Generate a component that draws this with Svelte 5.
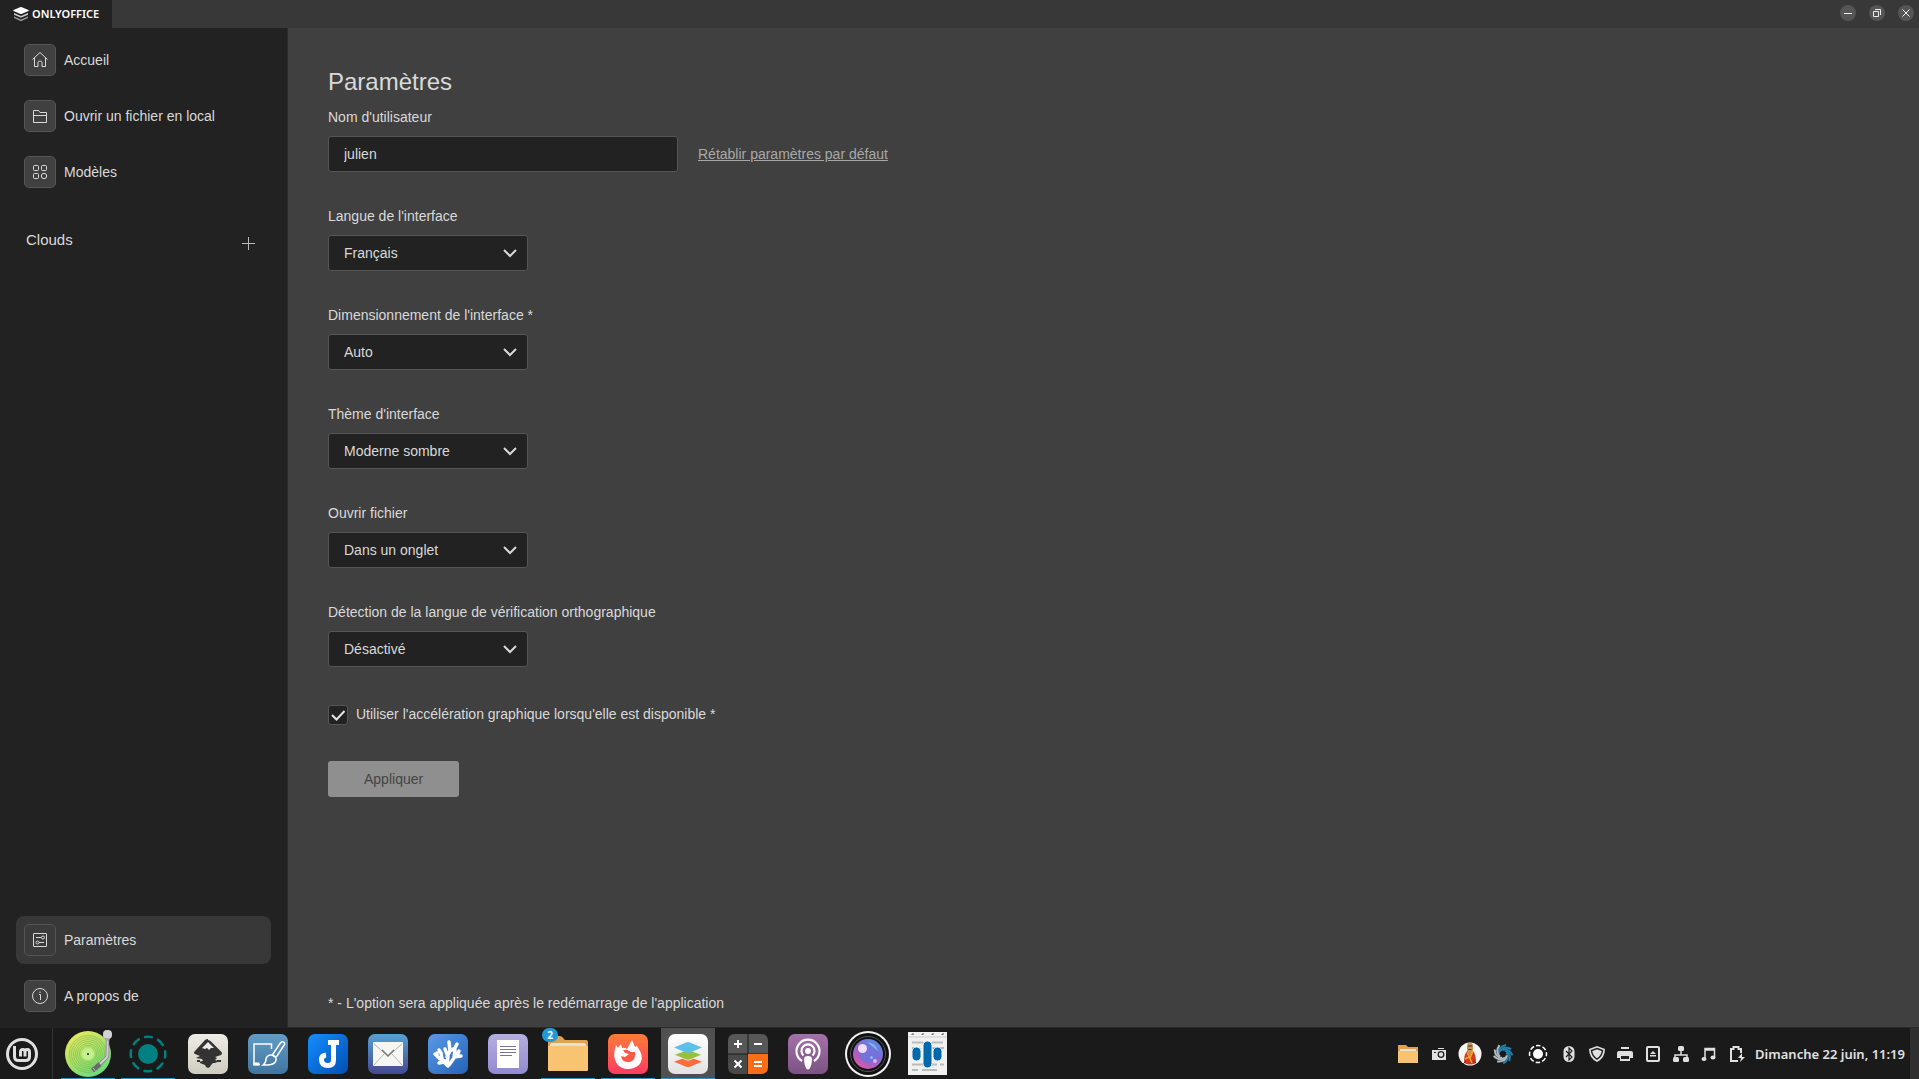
<script>
    const navItems = [
        {
            label: "Accueil",
            icon: '<path d="M1.5 8.5 9 1.5l7.500 7M3.500 7v8.500h3.500v-4q0-1.500 2-1.500t2 1.500v4h3.500V7"/>',
        },
        {
            label: "Ouvrir un fichier en local",
            icon: '<path d="M2.500 15.500h13v-10H9L7.500 3.500h-5zM2.500 8.500h13"/>',
        },
        {
            label: "Modèles",
            icon: '<rect x="2.500" y="2.500" width="5" height="5" rx="1"/><rect x="10.500" y="2.500" width="5" height="5" rx="1"/><rect x="2.500" y="10.500" width="5" height="5" rx="1"/><circle cx="13" cy="13" r="2.700"/>',
        },
    ];

    const bottomItems = [
        {
            label: "Paramètres",
            active: true,
            icon: '<rect x="2.500" y="2.500" width="13" height="13" rx="0.500"/><path d="M5 6.500h5.500M8 11.500h5"/><circle cx="12" cy="6.500" r="1.500"/><circle cx="6.500" cy="11.500" r="1.500"/>',
        },
        {
            label: "A propos de",
            icon: '<circle cx="9" cy="9" r="7.500"/><path d="M8 7.500h1.500V13M9 4.500v1.500"/>',
        },
    ];

    let username = "julien";
    let useGpu = true;

    const settings = [
        {
            id: "lang",
            label: "Langue de l'interface",
            options: ["Français", "English"],
        },
        {
            id: "scaling",
            label: "Dimensionnement de l'interface *",
            options: ["Auto", "100%", "125%", "150%"],
        },
        {
            id: "theme",
            label: "Thème d'interface",
            options: ["Moderne sombre", "Moderne clair"],
        },
        {
            id: "open",
            label: "Ouvrir fichier",
            options: ["Dans un onglet", "Dans une fenêtre"],
        },
        {
            id: "spell",
            label: "Détection de la langue de vérification orthographique",
            options: ["Désactivé", "Activé"],
        },
    ];

    const tile = (fill) =>
        `<rect x="4" y="4" width="40" height="40" rx="7" fill="${fill}"/>`;

    const apps = [
        {
            label: "Musique",
            running: true,
            icon: `<circle cx="24" cy="24" r="23" fill="url(#g-vinyl)"/>
                <g fill="none" stroke="#6fae45" stroke-width="0.600" opacity="0.8"><circle cx="24" cy="24" r="8.500"/><circle cx="24" cy="24" r="10.500"/><circle cx="24" cy="24" r="12.500"/><circle cx="24" cy="24" r="14.500"/><circle cx="24" cy="24" r="16.500"/><circle cx="24" cy="24" r="18.500"/></g>
                <circle cx="24" cy="24" r="6" fill="#c5f08e"/><circle cx="24" cy="24" r="1" fill="#222"/>
                <path d="M43.500 8v17.500q0 1-1 2L33 37" fill="none" stroke="#85858a" stroke-width="3.500"/><path d="M43.500 8v17.500q0 1-1 2L33 37" fill="none" stroke="#d0d0d4" stroke-width="2"/>
                <path d="M36 34l-7.500 6.500" stroke="#68686e" stroke-width="4.500"/><path d="M29 38l2.500 3" stroke="#bbb"/>
                <rect x="39" y="0" width="9" height="9" rx="4" fill="#d2d2d4"/><path d="M41 8h5l-1 3h-3z" fill="#aaa"/>`,
        },
        {
            label: "Moniteur",
            running: true,
            icon: `<circle cx="24" cy="24" r="10" fill="#008080"/>
                <circle cx="24" cy="24" r="17.300" fill="none" stroke="#008080" stroke-width="2.500" stroke-linecap="round" stroke-dasharray="7 6.587" stroke-dashoffset="3.500"/>`,
        },
        {
            label: "Inkscape",
            icon: `${tile("url(#g-cream)")}<path d="M24 10q1.500 0 3 1.500l10 10q2 2 0 3.500l-6 2 2 1-2 2 3 1q-1 2-5 2l-2 2q-1 3-3 3t-3-3l-5-2q-1-2 3-2l-1-2-6-1 4-2-5-2q-2-1 0-3l10-11q1.500-1 3-1z" fill="#333"/>
                <path d="M24 12l-6 6 3 1 2-1 2 2 2-2 3 0z" fill="#eceae3"/><path d="M13 31h3M33 31h4" stroke="#333" stroke-width="2"/>`,
        },
        {
            label: "Dessin",
            icon: `${tile("url(#g-paint)")}<g fill="none" stroke="#fff" stroke-width="1.500"><path d="M16 34.500h-6V14h17.500v5"/><path d="M9.500 34h6" stroke-width="3"/>
                <path d="M29 24 36 13.500q2-2.500 3.800-1.300t0 3.300L33 26q-1.500 1.300-3 .500T29 24zM19 35q3-2 3-6 1-4 5-4t5 3q1 8-13 7z"/></g>`,
        },
        {
            label: "Joplin",
            icon: `${tile("url(#g-joplin)")}<path d="M24 12.500h11M29.500 13v17q0 5.500-5.500 5.500-6.500 0-6.500-6 0-4 4.500-4.500" fill="none" stroke="#fff" stroke-width="5"/>`,
        },
        {
            label: "Courrier",
            icon: `${tile("url(#g-mail)")}<rect x="9" y="12" width="30" height="24" rx="1" fill="#f6f6f3"/>
                <path d="M10 14l14 12 14-12M10 35l10-11M38 35 28 24" fill="none" stroke="#b5b5b0" stroke-width="1"/><path d="M18 20l6 6 6-6" fill="none" stroke="#777" stroke-width="1.500"/>`,
        },
        {
            label: "Corail",
            icon: `${tile("url(#g-coral)")}<path d="M24 36l-3-5-5-2-5-5M15 33l5-1 4 4M18 29l-1-6-2-3M23 34l1-7-3-8M23 27l3-6-1-9M26 21l5-3 2-4M25 35l5-7 1-8M30 27l7-1M33 26l2-5M13 26v-3" fill="none" stroke="#fff" stroke-width="3.500" stroke-linecap="round" stroke-linejoin="round"/>`,
        },
        {
            label: "Texte",
            icon: `${tile("url(#g-text)")}<path d="M13 10h22v28H13z" fill="#fff"/><path d="M16 16.500h16M16 19.500h16M16 22.500h16M16 25.500h12" stroke="#777399"/>`,
        },
        {
            label: "Fichiers",
            running: true,
            badge: 2,
            icon: `<path d="M4 6h12q2 0 4 3l1 1h21q2 0 2 2v9H4z" fill="#dfa24e"/><path d="M6 15q0-2 2-2h32q2 0 2 2v6H6z" fill="#e3e1dd"/><path d="M4 16h40v24q0 1-1 1H5q-1 0-1-1z" fill="#f8c471"/>`,
        },
        {
            label: "Firefox",
            running: true,
            icon: `${tile("url(#g-fox)")}<path d="M12 15l2 3 3-4 1 4q3-1 5 1l5-9 3 7 2-1 3 5q4 8-1 14-5 4-11 4-7 0-11-5-5-7-1-19z" fill="#fff"/>
                <path d="M19 20q4-1 6 1l4-1q3 2 2 6-1 6-7 6-6 0-7-6l4 1 4-3-4-1z" fill="#ff5945"/><path d="M28 15l3 7-5 0z" fill="#fff"/>`,
        },
        {
            label: "ONLYOFFICE",
            running: true,
            active: true,
            icon: `${tile("url(#g-white)")}<path d="M24 26.500l14 5.300-12 5q-2 .800-4 0l-12-5z" fill="#fb6d3f"/><path d="M24 19.500l14 5.300-12 5q-2 .800-4 0l-12-5z" fill="#95c13d" stroke="#efefef" stroke-width="0.800"/><path d="M22 12.500q2-.800 4 0l12 5-12 5q-2 .800-4 0l-12-5z" fill="#5dc0e8"/>`,
        },
        {
            label: "Calculatrice",
            icon: `<path d="M11 4h12.500v19.500H4V11q0-7 7-7z" fill="#575757"/><path d="M24.500 4H37q7 0 7 7v12.500H24.500z" fill="#575757"/><path d="M4 24.500h19.500V44H11q-7 0-7-7z" fill="#494949"/><path d="M24 24h20v13q0 7-7 7H24z" fill="#fb6d17"/>
                <path d="M10 14h8M14 10v8M30 14h8M10.500 30.500l7 7M17.500 30.500l-7 7M30 32h8M30 36h8" stroke="#fff" stroke-width="2"/>`,
        },
        {
            label: "Podcasts",
            icon: `${tile("url(#g-pod)")}<g fill="none" stroke="#fff" stroke-width="2.200"><path d="M18 31a11.500 11.500 0 1 1 12 0"/><path d="M19.500 25.500a6.500 6.500 0 1 1 9 0"/></g><circle cx="24" cy="21" r="3" fill="#fff"/><path d="M20 29q0-3 4-3t4 3q0 5-2 9-2 3-4 0-2-4-2-9z" fill="#fff"/>`,
        },
        {
            label: "Webcam",
            icon: `<circle cx="24" cy="24" r="23" fill="#f2f2ef"/><circle cx="24" cy="24" r="21" fill="#111"/><circle cx="24" cy="24" r="17.500" fill="none" stroke="#555"/><circle cx="24" cy="24" r="15" fill="url(#g-lens)"/>
                <circle cx="24" cy="24" r="9" fill="#6b77dd" opacity="0.8"/><path d="M23 12q9 1 11 9-6-5-11-9z" fill="#8acdf2" opacity="0.7"/><circle cx="18.500" cy="18.500" r="4.500" fill="#efdcff"/><circle cx="31" cy="31" r="2" fill="#d4b5f5"/><circle cx="27.500" cy="27.500" r="1.200" fill="#9fc5ff"/>`,
        },
        {
            label: "Dictée",
            icon: `<path d="M4 2h39v43H4z" fill="#f1f1f1"/><path d="M4 7h39" stroke="#ccc"/><path d="M8 5V4h2M18 5V4h2M28 5V4h2M38 5V4h2" fill="none" stroke="#555"/>
                <path d="M8 12.500h11M28 12.500h11M8 18h6M28 18h12M8 34.500h11M28 34.500h5M36 34.500h4M8 40h6M18 40h15" stroke="#bbb" stroke-width="2"/>
                <g fill="#0069ad" stroke="#f1f1f1"><rect x="8" y="17" width="9" height="14" rx="4.500"/><rect x="19" y="11" width="9" height="27" rx="4.500"/><rect x="29" y="17" width="9" height="14" rx="4.500"/></g>`,
        },
    ];

    const swirl = [0, 40, 80, 120, 160, 200, 240, 280, 320]
        .map(
            (a) =>
                `<path d="M8 12q-1-7 7-9" fill="none" stroke="${a > 190 && a < 330 ? "#b3bcc2" : "#2380ab"}" stroke-width="2" transform="rotate(${a} 12 12)"/>`
        )
        .join("");

    const tray = [
        {
            label: "Dossier",
            size: "medium",
            icon: `<path d="M2 3h8l2 2h10v8H2z" fill="#dfa24e"/><path d="M4 7h16v4H4z" fill="#e6e3dd"/><path d="M2 9h20v12H2z" fill="#f8c471"/>`,
        },
        {
            label: "Capture",
            size: "medium",
            icon: `<path d="M5 8h14v10H5z" fill="#e0e0e0"/><path d="M11 6.500h6" stroke="#e0e0e0"/><circle cx="14" cy="12.500" r="2.800" fill="none" stroke="#222" stroke-width="1.300"/><path d="M7 10.500h2" stroke="#222"/>`,
        },
        {
            label: "Profil",
            size: "medium",
            icon: `<circle cx="12" cy="12" r="11.500" fill="#f8f6f2"/><path d="M9 9h6q3 3 3 12-6 3-12 0 0-9 3-12z" fill="#d43a22"/><path d="M9 4q0-3.500 3-3.500t3 3.500v4l-3 6-3-6z" fill="#c69655"/><path d="M10 4h4M10.500 7.500h3" stroke="#5a2d19"/><path d="M9 10l5 11M15 9l-3 7M7 17l4-2" stroke="#f5a92c" stroke-width="1.500"/><path d="M5 22l3-3M18 21l-3-2" stroke="#5a2d19"/>`,
        },
        { label: "Tourbillon", size: "large", icon: swirl },
        {
            label: "Luminosité",
            size: "large",
            icon: `<circle cx="12" cy="12" r="5" fill="#fff"/><circle cx="12" cy="12" r="8.500" fill="none" stroke="#fff" stroke-width="1.500" stroke-dasharray="4.500 2.176" stroke-dashoffset="2.250"/>`,
        },
        {
            label: "Bluetooth",
            icon: `<rect x="6.500" y="4" width="11" height="16" rx="5.500" fill="#e0e0e0"/><path d="M9 9l6 6-3 3V6l3 3-6 6" fill="none" stroke="#222" stroke-width="1.200"/>`,
        },
        {
            label: "Mises à jour",
            icon: `<path d="M12 4l8 3q0 9-8 13Q4 16 4 7z" fill="#e0e0e0"/><path d="M12 6.500l5.500 2q-.500 5.500-5.500 8.700-5-3.200-5.500-8.700z" fill="none" stroke="#222" stroke-width="1.500"/>`,
        },
        {
            label: "Imprimante",
            icon: `<path d="M8 5h8v2H8zM6 9h12q2 0 2 2v5h-3v3H7v-3H4v-5q0-2 2-2z" fill="#e0e0e0"/><path d="M8 14h8v3H8z" fill="#222"/>`,
        },
        {
            label: "Périphériques",
            icon: `<rect x="6" y="5" width="12" height="14" rx="1" fill="none" stroke="#e0e0e0" stroke-width="2"/><path d="M12 9l3 3H9zM9 13h6v1.500H9z" fill="#e0e0e0"/>`,
        },
        {
            label: "Réseau",
            icon: `<path d="M12 8v5M6 16v-3h12v3" fill="none" stroke="#e0e0e0" stroke-width="1.500"/><rect x="9" y="4" width="6" height="5" rx="1.500" fill="#e0e0e0"/><rect x="4" y="15" width="6" height="5" rx="1.500" fill="#e0e0e0"/><rect x="14" y="15" width="6" height="5" rx="1.500" fill="#e0e0e0"/>`,
        },
        {
            label: "Son",
            icon: `<path d="M8 17V6.500h9.500V15M8 8h9.500" fill="none" stroke="#e0e0e0" stroke-width="1.500"/><ellipse cx="7" cy="17" rx="2.500" ry="2" fill="#e0e0e0"/><ellipse cx="16" cy="15.500" rx="2.500" ry="2" fill="#e0e0e0"/>`,
        },
        {
            label: "Batterie",
            icon: `<path d="M13 19H6V7h2.500V5h5v2H16v4" fill="none" stroke="#e0e0e0" stroke-width="2"/><path d="M17 11l-4 5h3l-1 4 5-5h-3z" fill="#e0e0e0"/>`,
        },
    ];
</script>

{#snippet navLink(item)}
    <a class="nav-item" class:active={item.active} href={"#"}>
        <span class="nav-icon">
            <svg viewBox="0 0 18 18" aria-hidden="true">{@html item.icon}</svg>
        </span>
        {item.label}
    </a>
{/snippet}

<!-- shared gradients for the taskbar icons -->
<svg class="defs" aria-hidden="true">
    <defs>
        <linearGradient id="g-vinyl" x1="0.2" y1="0" x2="0.8" y2="1">
            <stop offset="0" stop-color="#eaea62" />
            <stop offset="0.5" stop-color="#a9e069" />
            <stop offset="1" stop-color="#5fdc80" />
        </linearGradient>
        <linearGradient id="g-cream" x2="0" y2="1">
            <stop stop-color="#eeece5" />
            <stop offset="1" stop-color="#d0ccc0" />
        </linearGradient>
        <linearGradient id="g-paint" x2="0" y2="1">
            <stop stop-color="#629dc7" />
            <stop offset="1" stop-color="#41759f" />
        </linearGradient>
        <linearGradient id="g-joplin" x2="1" y2="1">
            <stop stop-color="#128fff" />
            <stop offset="1" stop-color="#024eb4" />
        </linearGradient>
        <linearGradient id="g-mail" x2="0" y2="1">
            <stop stop-color="#55a2d3" />
            <stop offset="1" stop-color="#474794" />
        </linearGradient>
        <linearGradient id="g-coral" x2="1" y2="1">
            <stop stop-color="#5b9ae6" />
            <stop offset="1" stop-color="#2462b8" />
        </linearGradient>
        <linearGradient id="g-text" x2="0" y2="1">
            <stop stop-color="#b4afdf" />
            <stop offset="1" stop-color="#918bd0" />
        </linearGradient>
        <linearGradient id="g-fox" x2="0" y2="1">
            <stop stop-color="#ff7b38" />
            <stop offset="1" stop-color="#ff3b62" />
        </linearGradient>
        <linearGradient id="g-white" x2="0" y2="1">
            <stop stop-color="#fff" />
            <stop offset="1" stop-color="#e2e2e2" />
        </linearGradient>
        <linearGradient id="g-pod" x2="0" y2="1">
            <stop stop-color="#a471a9" />
            <stop offset="1" stop-color="#7b5383" />
        </linearGradient>
        <linearGradient id="g-lens" x1="1" y1="0" x2="0.3" y2="1">
            <stop stop-color="#4b9be8" />
            <stop offset="0.5" stop-color="#8468d2" />
            <stop offset="1" stop-color="#d957ac" />
        </linearGradient>
    </defs>
</svg>

<div class="desktop">
    <header class="titlebar">
        <a class="home-tab" href={"#"}>
            <svg viewBox="0 0 16 14" aria-hidden="true">
                <path d="M1 9.500 8 12.500l7-3v1.500l-6 2.700q-1 .400-2 0L1 11z" fill="#999" />
                <path d="M1 6 8 9l7-3v1.700l-6 2.600q-1 .400-2 0L1 7.700z" fill="#ccc" />
                <path d="M7 .200q1-.400 2 0l6.500 2.900q.400.400 0 .800L9 6.800q-1 .400-2 0L.500 3.900q-.400-.400 0-.800z" fill="#fff" />
            </svg>
            ONLYOFFICE
        </a>
        <div class="window-controls">
            <button type="button" aria-label="Réduire">
                <svg viewBox="0 0 16 16"><path d="M4 8.500h8" /></svg>
            </button>
            <button type="button" aria-label="Restaurer">
                <svg viewBox="0 0 16 16"><path d="M4.500 6.500h5v5h-5zM6 4.500h5.500V10" /></svg>
            </button>
            <button type="button" aria-label="Fermer">
                <svg viewBox="0 0 16 16"><path d="M4.500 4.500l7 7M11.500 4.500l-7 7" /></svg>
            </button>
        </div>
    </header>

    <div class="window">
        <aside class="sidebar">
            <nav>
                {#each navItems as item}
                    {@render navLink(item)}
                {/each}
            </nav>
            <div class="clouds">
                <span>Clouds</span>
                <button type="button" aria-label="Ajouter un cloud">
                    <svg viewBox="0 0 13 13"><path d="M0 6.500h13M6.500 0v13" /></svg>
                </button>
            </div>
            <nav class="bottom">
                {#each bottomItems as item}
                    {@render navLink(item)}
                {/each}
            </nav>
        </aside>

        <main>
            <h1>Paramètres</h1>
            <form on:submit|preventDefault>
                <div class="field">
                    <label for="username">Nom d'utilisateur</label>
                    <div class="field-row">
                        <input id="username" type="text" bind:value={username} />
                        <a class="reset" href={"#"}>Rétablir paramètres par défaut</a>
                    </div>
                </div>
                {#each settings as setting}
                    <div class="field">
                        <label for={setting.id}>{setting.label}</label>
                        <div class="select">
                            <select id={setting.id}>
                                {#each setting.options as option}
                                    <option>{option}</option>
                                {/each}
                            </select>
                            <svg viewBox="0 0 16 12" aria-hidden="true"><path d="M2 3l6 6 6-6" /></svg>
                        </div>
                    </div>
                {/each}
                <label class="checkbox">
                    <span class="box">
                        <input type="checkbox" bind:checked={useGpu} />
                        {#if useGpu}
                            <svg viewBox="0 0 20 20" aria-hidden="true"><path d="M4 10l4.500 4.500L16.500 6" /></svg>
                        {/if}
                    </span>
                    Utiliser l'accélération graphique lorsqu'elle est disponible *
                </label>
                <button class="apply" type="submit" disabled>Appliquer</button>
            </form>
            <p class="note">* - L'option sera appliquée après le redémarrage de l'application</p>
        </main>
    </div>

    <footer class="taskbar">
        <button class="start" type="button" aria-label="Menu">
            <svg viewBox="0 0 32 32">
                <circle cx="16" cy="16" r="14.500" />
                <path d="M8.500 8v10.500q0 4 4 4h7q4 0 4-4V14q0-2.500-2.200-2.500T19 14v4.500M19 14q0-2.500-2.300-2.500T14.500 14v4.500" />
            </svg>
        </button>
        <div class="apps">
            {#each apps as app}
                <button
                    class="app"
                    class:running={app.running}
                    class:active={app.active}
                    type="button"
                    aria-label={app.label}
                >
                    <svg viewBox="0 0 48 48">{@html app.icon}</svg>
                    {#if app.badge}
                        <span class="badge">{app.badge}</span>
                    {/if}
                </button>
            {/each}
        </div>
        <div class="tray">
            {#each tray as item}
                <button class="tray-item {item.size || ''}" type="button" aria-label={item.label}>
                    <svg viewBox="0 0 24 24">{@html item.icon}</svg>
                </button>
            {/each}
        </div>
        <time class="clock">Dimanche 22 juin, 11:19</time>
        <button class="show-desktop" type="button" aria-label="Afficher le bureau"></button>
    </footer>
</div>

<style>
    :global(body) {
        margin: 0;
        background: #404040;
    }

    .defs {
        position: absolute;
        width: 0;
        height: 0;
    }

    .desktop {
        display: flex;
        flex-direction: column;
        min-height: 100vh;
        color: #d9d9d9;
        font-family: "Liberation Sans", Arial, sans-serif;
        font-size: 14px;
        line-height: 16px;
    }

    button,
    input,
    select {
        box-sizing: border-box;
        margin: 0;
        padding: 0;
        border: 0;
        background: none;
        color: inherit;
        font: inherit;
    }

    a {
        color: inherit;
        text-decoration: none;
    }

    svg {
        display: block;
        flex: none;
    }

    .titlebar {
        display: flex;
        justify-content: space-between;
        height: 28px;
        background: #383838;
    }

    .home-tab {
        display: flex;
        align-items: center;
        gap: 3px;
        box-sizing: border-box;
        width: 112px;
        padding-left: 13px;
        background: #222;
        color: #fff;
        font-family: "Noto Sans", sans-serif;
        font-size: 11px;
        font-weight: 600;
    }

    .home-tab svg {
        width: 16px;
        height: 14px;
    }

    .window-controls {
        display: flex;
        gap: 13px;
        padding: 5px 5px 0 0;
    }

    .window-controls button {
        width: 16px;
        height: 16px;
        border-radius: 50%;
        background: #555;
    }

    .window-controls svg {
        fill: none;
        stroke: #eee;
    }

    .window {
        display: flex;
        flex: 1;
    }

    .sidebar {
        display: flex;
        flex-direction: column;
        box-sizing: border-box;
        width: 288px;
        padding: 8px 16px;
        border-right: 1px solid #2b2b2b;
        background: #222;
    }

    nav {
        display: flex;
        flex-direction: column;
        gap: 8px;
    }

    nav.bottom {
        margin-top: auto;
    }

    .nav-item {
        display: flex;
        align-items: center;
        gap: 8px;
        height: 48px;
        padding-left: 8px;
        border-radius: 8px;
    }

    .nav-item.active {
        background: #383838;
    }

    .nav-icon {
        display: grid;
        place-items: center;
        box-sizing: border-box;
        width: 32px;
        height: 32px;
        border: 1px solid #555;
        border-radius: 5px;
        background: #404040;
    }

    .nav-item.active .nav-icon {
        background: #3b3b3b;
    }

    .nav-icon svg {
        width: 18px;
        height: 18px;
        fill: none;
        stroke: #d9d9d9;
    }

    .clouds {
        display: flex;
        justify-content: space-between;
        padding: 36px 16px 0 10px;
        font-size: 15px;
    }

    .clouds button {
        width: 13px;
        height: 13px;
        margin-top: 5px;
    }

    .clouds svg {
        stroke: #bbb;
    }

    main {
        display: flex;
        flex: 1;
        flex-direction: column;
        padding: 40px 40px 16px;
        border-bottom: 1px solid #2b2b2b;
        background: #404040;
    }

    h1 {
        margin: 0 0 13px;
        font-size: 24px;
        font-weight: 400;
        line-height: 28px;
    }

    .field {
        display: flex;
        flex-direction: column;
        gap: 11px;
        margin-bottom: 36px;
    }

    .field-row {
        display: flex;
        align-items: center;
        gap: 20px;
    }

    input[type="text"],
    select {
        height: 36px;
        padding: 0 15px;
        border: 1px solid #555;
        border-radius: 3px;
        background: #222;
    }

    input[type="text"] {
        width: 350px;
    }

    .reset {
        color: #a8a8a8;
        text-decoration: underline;
    }

    .select {
        display: grid;
        align-items: center;
        width: 200px;
    }

    .select select {
        grid-area: 1 / 1;
        appearance: none;
    }

    .select svg {
        grid-area: 1 / 1;
        justify-self: end;
        width: 16px;
        height: 12px;
        margin-right: 10px;
        fill: none;
        stroke: #d9d9d9;
        stroke-width: 2;
        pointer-events: none;
    }

    .checkbox {
        display: flex;
        gap: 8px;
        padding-top: 2px;
        line-height: 18px;
    }

    .box {
        display: grid;
    }

    .box input {
        grid-area: 1 / 1;
        width: 20px;
        height: 20px;
        border: 1px solid #555;
        border-radius: 3px;
        background: #222;
        appearance: none;
    }

    .box svg {
        grid-area: 1 / 1;
        width: 20px;
        height: 20px;
        fill: none;
        stroke: #e5e5e5;
        stroke-width: 2;
        pointer-events: none;
    }

    .apply {
        height: 36px;
        margin-top: 36px;
        padding: 0 36px;
        border-radius: 3px;
        background: #8f8f8f;
        color: #444;
    }

    .note {
        margin: auto 0 0;
    }

    .taskbar {
        display: flex;
        height: 51px;
        background: #1a1a1a;
    }

    .start {
        display: flex;
        align-items: center;
        width: 53px;
        padding-left: 6px;
        border-right: 1px solid #333;
    }

    .start svg {
        width: 32px;
        height: 32px;
        fill: none;
        stroke: #e0e0e0;
        stroke-width: 3;
    }

    .apps {
        display: flex;
        flex: 1;
        gap: 6px;
        padding-left: 8px;
    }

    .app {
        position: relative;
        width: 54px;
        padding: 1px 3px 0;
    }

    .app svg {
        width: 48px;
        height: 48px;
    }

    .app.running {
        border-bottom: 1px solid #1e9ad6;
    }

    .app.active {
        background: #505050;
    }

    .badge {
        position: absolute;
        top: 0;
        left: 1px;
        width: 16px;
        height: 14px;
        border-radius: 7px;
        background: #1e9ad6;
        color: #fff;
        font-family: "Noto Sans", sans-serif;
        font-size: 10px;
        font-weight: 700;
        line-height: 14px;
    }

    .tray {
        display: flex;
    }

    .tray-item {
        display: grid;
        place-items: center;
        width: 28px;
    }

    .tray-item.medium {
        width: 31px;
    }

    .tray-item.large {
        width: 35px;
    }

    .tray-item svg {
        width: 24px;
        height: 24px;
    }

    .clock {
        align-self: center;
        padding: 0 5px 0 4px;
        color: #e0e0e0;
        font-family: "Noto Sans", sans-serif;
        font-size: 13px;
        font-weight: 600;
    }

    .show-desktop {
        width: 9px;
        background: #2f2f2f;
    }
</style>
